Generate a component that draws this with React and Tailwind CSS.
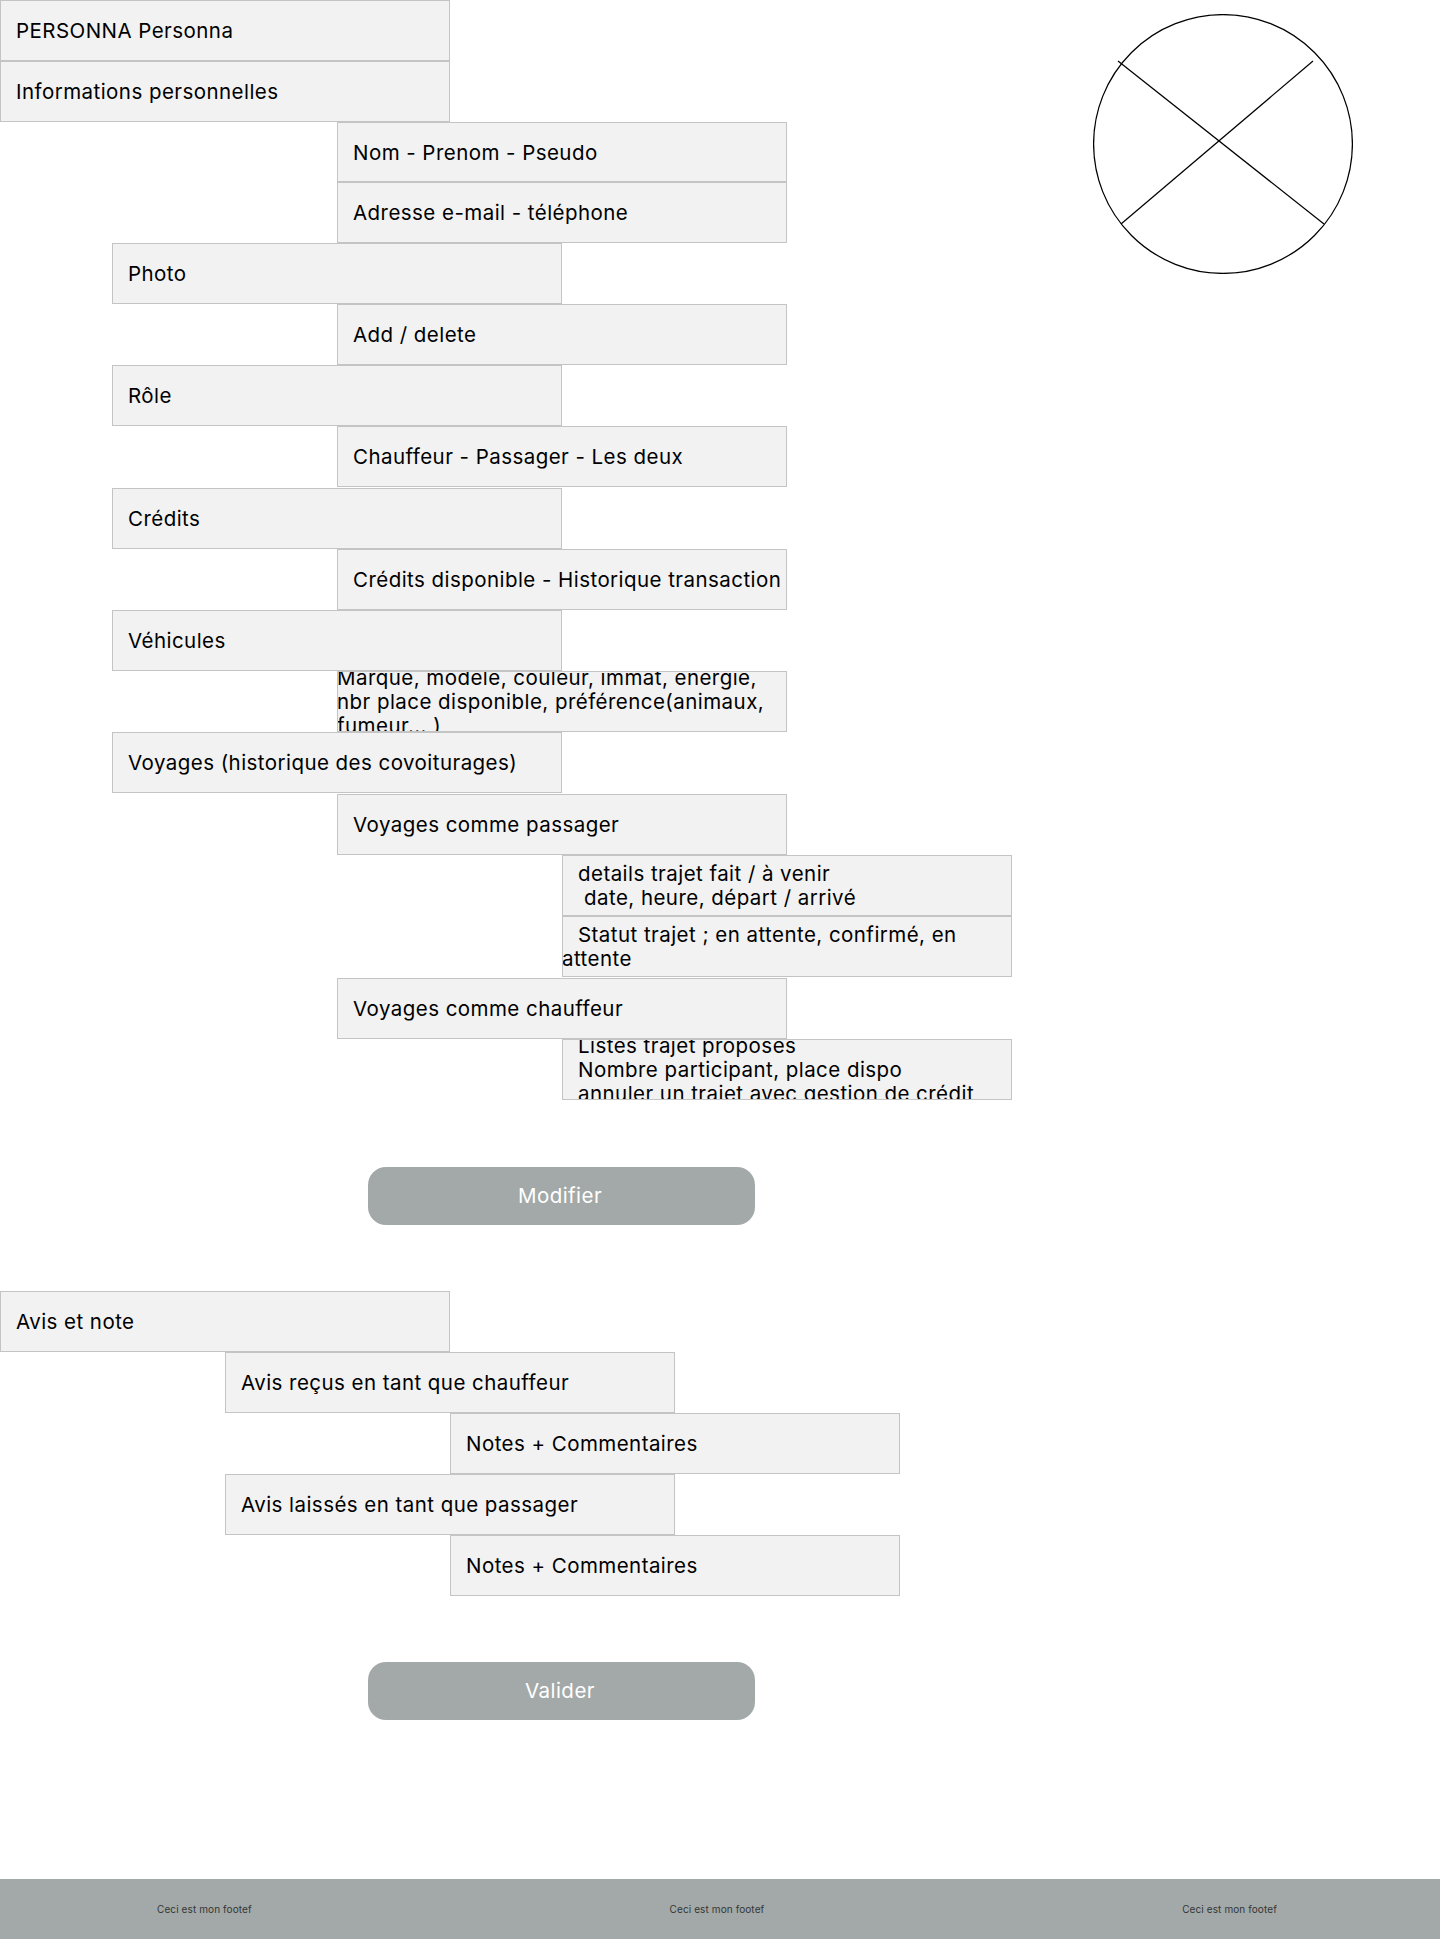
const Box = ({ ml = "ml-0", mt = "", h = "h-[61px]", children, clip = "items-center pl-[15px]" }) => (
  <div className={`${ml} ${mt} ${h} w-[450px] pt-px shrink-0 flex ${clip} overflow-hidden bg-[#f2f2f2] border border-[#c4c4c4] text-[20.5px] leading-[24px] tracking-[0.45px] text-black whitespace-nowrap`}>
    {children}
  </div>
);

const Pill = ({ mt, children }) => (
  <div className={`${mt} ml-[368px] w-[387px] h-[58px] pr-[3px] pt-px rounded-[18px] bg-[#a3a9a8] flex items-center justify-center text-[20.5px] tracking-[0.45px] text-white`}>
    {children}
  </div>
);

const Foot = ({ children }) => (
  <span className="text-[10px] tracking-[0.1px] text-[#333636] whitespace-nowrap">{children}</span>
);

export default function App() {
  return (
    <div className="w-[1440px] h-[1939px] flex flex-col bg-white font-['Inter',sans-serif]">
      <div className="flex items-start">
        <div className="flex flex-col">
          <Box>PERSONNA Personna</Box>
          <Box>Informations personnelles</Box>
          <Box ml="ml-[337px]" h="h-[60px]">Nom - Prenom - Pseudo</Box>
          <Box ml="ml-[337px]">Adresse e-mail - téléphone</Box>
          <Box ml="ml-[112px]">Photo</Box>
          <Box ml="ml-[337px]">Add / delete</Box>
          <Box ml="ml-[112px]">Rôle</Box>
          <Box ml="ml-[337px]">Chauffeur - Passager - Les deux</Box>
          <Box ml="ml-[112px]" mt="mt-[1px]">Crédits</Box>
          <Box ml="ml-[337px]">Crédits disponible - Historique transaction</Box>
          <Box ml="ml-[112px]">Véhicules</Box>
          <Box ml="ml-[337px]" clip="items-center">
            <div className="-ml-px">
              Marque, modèle, couleur, immat, energie,
              <br />
              nbr place disponible, préférence(animaux,
              <br />
              fumeur... )
            </div>
          </Box>
          <Box ml="ml-[112px]">Voyages (historique des covoiturages)</Box>
          <Box ml="ml-[337px]" mt="mt-[1px]">Voyages comme passager</Box>
          <Box ml="ml-[562px]" clip="items-center">
            <div className="pl-[15px]">
              details trajet fait / à venir
              <br />
              <span className="pl-[6px]">date, heure, départ / arrivé</span>
            </div>
          </Box>
          <Box ml="ml-[562px]" clip="items-center">
            <div className="-ml-px">
              <span className="pl-4">Statut trajet ; en attente, confirmé, en</span>
              <br />
              attente
            </div>
          </Box>
          <Box ml="ml-[337px]" mt="mt-[1px]">Voyages comme chauffeur</Box>
          <Box ml="ml-[562px]" clip="items-center">
            <div className="pl-[15px]">
              Listes trajet proposés
              <br />
              Nombre participant, place dispo
              <br />
              annuler un trajet avec gestion de crédit
            </div>
          </Box>
          <Pill mt="mt-[67px]">Modifier</Pill>
        </div>
        <svg className="ml-auto mr-[87px] mt-[14px] shrink-0" width="260" height="260" viewBox="0 0 260 260" fill="none" stroke="#000000" strokeWidth="1.25">
          <circle cx="130" cy="130" r="129.4" />
          <line x1="25" y1="47" x2="231" y2="210" />
          <line x1="28" y1="210" x2="220" y2="47" />
        </svg>
      </div>
      <div className="flex flex-col mt-[66px]">
        <Box>Avis et note</Box>
        <Box ml="ml-[225px]">Avis reçus en tant que chauffeur</Box>
        <Box ml="ml-[450px]">Notes + Commentaires</Box>
        <Box ml="ml-[225px]">Avis laissés en tant que passager</Box>
        <Box ml="ml-[450px]">Notes + Commentaires</Box>
        <Pill mt="mt-[66px]">Valider</Pill>
      </div>
      <footer className="mt-auto h-[60px] bg-[#a3a9a8] flex items-center justify-between pl-[157px] pr-[163px]">
        <Foot>Ceci est mon footef</Foot>
        <Foot>Ceci est mon footef</Foot>
        <Foot>Ceci est mon footef</Foot>
      </footer>
    </div>
  );
}
